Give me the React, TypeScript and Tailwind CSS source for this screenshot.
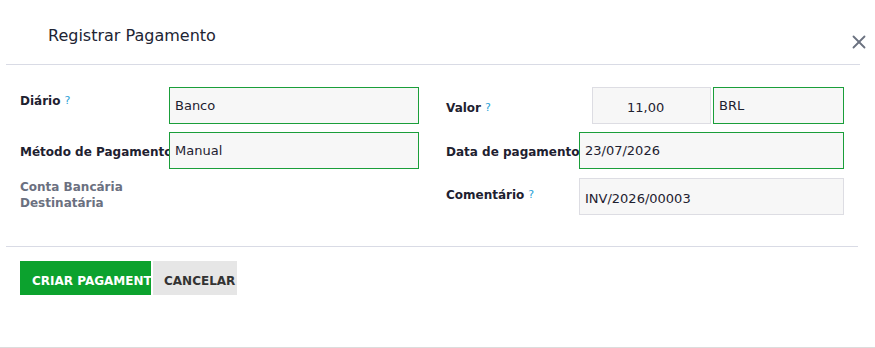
import { X } from 'lucide-react'

const font = { fontFamily: '"DejaVu Sans", Verdana, sans-serif' }

function Help() {
  return <sup className="ml-[4px] text-[11px] font-normal text-[#2a9fd6] relative -top-[1px]">?</sup>
}

function Field({ value, green, className = '' }: { value: string; green?: boolean; className?: string }) {
  return (
    <div
      className={`h-[37px] bg-[#f7f7f7] border text-[13px] text-[#1e2130] flex items-center pl-[5px] ${
        green ? 'border-[#1a9e3a]' : 'border-[#dddde3]'
      } ${className}`}
    >
      {value}
    </div>
  )
}

export default function App() {
  return (
    <div className="w-[875px] h-[348px] bg-white border-b border-[#dcdcdc] relative overflow-hidden" style={font}>
      {/* header */}
      <div className="ml-[6px] mr-[15px] h-[65px] border-b border-[#d9dbe5] flex items-start">
        <h4 className="pl-[42px] pt-[26px] text-[16px] leading-[20px] text-[#212433]">Registrar Pagamento</h4>
      </div>
      <button className="absolute left-[848px] top-[31px] text-[#6b7280]">
        <X size={22} strokeWidth={2} />
      </button>

      {/* body */}
      <div className="ml-[6px] mr-[17px] h-[182px] border-b border-[#d9dbe5] flex pt-[22px]">
        {/* left column */}
        <div className="w-[413px] pl-[14px] text-[12px] font-bold leading-[16px] text-[#1e2130]">
          <div className="flex h-[37px]">
            <div className="w-[149px] shrink-0 pt-[6px]">
              Diário
              <Help />
            </div>
            <Field value="Banco" green className="w-[251px] font-normal" />
          </div>
          <div className="flex h-[37px] mt-[8px]">
            <div className="w-[149px] shrink-0 pt-[12px] whitespace-nowrap overflow-hidden">Método de Pagamento</div>
            <Field value="Manual" green className="w-[251px] font-normal" />
          </div>
          <div className="mt-[9px] pt-[1px] text-[#6b7080] w-[140px]">Conta Bancária Destinatária</div>
        </div>

        {/* right column */}
        <div className="pl-[27px] text-[12px] font-bold leading-[16px] text-[#1e2130]">
          <div className="flex h-[37px]">
            <div className="w-[146px] shrink-0 pt-[13px]">
              Valor
              <Help />
            </div>
            <div className="w-[119px] h-[37px] bg-[#f7f7f7] border border-[#dddde3] text-[13px] font-normal pl-[34px] pt-[12px] leading-[16px]">
              11,00
            </div>
            <Field value="BRL" green className="w-[131px] ml-[2px] font-normal" />
          </div>
          <div className="flex h-[37px] mt-[8px]">
            <div className="w-[133px] shrink-0 pt-[12px] whitespace-nowrap overflow-hidden">Data de pagamento</div>
            <Field value="23/07/2026" green className="w-[265px] font-normal" />
          </div>
          <div className="flex h-[37px] mt-[9px]">
            <div className="w-[133px] shrink-0 pt-[9px]">
              Comentário
              <Help />
            </div>
            <div className="w-[265px] h-[37px] bg-[#f7f7f7] border border-[#dddde3] text-[13px] font-normal pl-[5px] pt-[12px] leading-[16px]">
              INV/2026/00003
            </div>
          </div>
        </div>
      </div>

      {/* footer */}
      <div className="pl-[20px] pt-[14px] flex gap-[2px] text-[12px] font-bold leading-[16px]">
        <button className="w-[131px] h-[34px] bg-[#0ca22e] text-white text-left pl-[12px] pt-[6px] overflow-hidden whitespace-nowrap">
          CRIAR PAGAMENTO
        </button>
        <button className="w-[84px] h-[34px] bg-[#e6e6e6] text-[#333333] text-left pl-[11px] pt-[6px] overflow-hidden whitespace-nowrap">
          CANCELAR
        </button>
      </div>
    </div>
  )
}
